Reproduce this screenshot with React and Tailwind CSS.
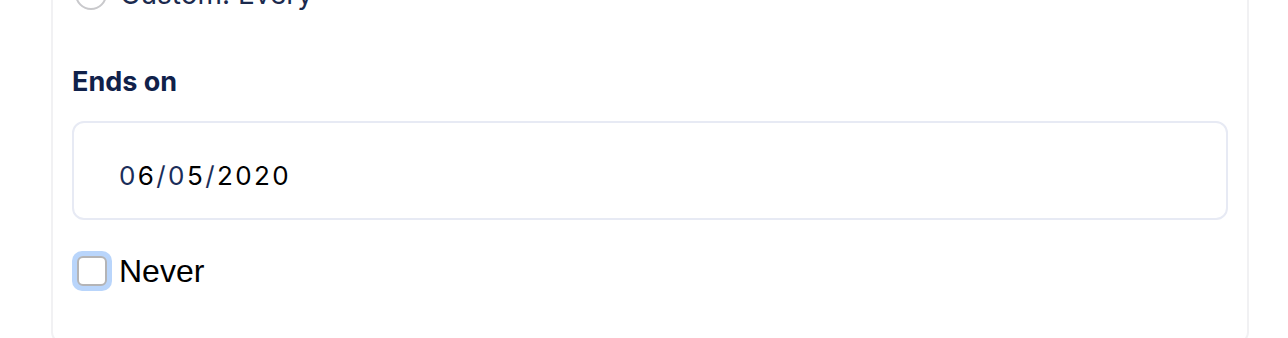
import React, { useState } from 'react';

const App = () => {
  const [never, setNever] = useState(false);

  return (
    <div className="w-[1288px] h-[338px] overflow-hidden bg-white">
      <div className="ml-[51px] w-[1198px] h-[346px] -mt-[2px] flex flex-col border-2 border-t-0 border-[#f1f1f3] rounded-b-[12px] px-[19px]">
        {/* radio row, cut off at top */}
        <div className="flex items-center gap-[13px] -mt-[20px] ml-[3px]">
          <div className="w-[32px] h-[32px] rounded-full border-2 border-[#c9c9cc] bg-white" />
          <span className="text-[28px] leading-[32px] text-[#1b2a4e]" style={{ fontFamily: 'Inter, sans-serif' }}>
            Custom: Every
          </span>
        </div>

        <div
          className="mt-[56px] text-[27px] leading-[32px] font-bold text-[#10214a]"
          style={{ fontFamily: 'Inter, sans-serif' }}
        >
          Ends on
        </div>

        <div className="mt-[23px] h-[99px] border-2 border-[#e7eaf4] rounded-[12px] flex items-center pl-[45px]">
          <span
            className="text-[26px] tracking-[2.4px] text-black pt-[10px]"
            style={{ fontFamily: 'Inter, sans-serif' }}
          >
            <span className="text-[#1b2e5a]">0</span>6<span className="text-[#1b2e5a]">/0</span>5<span className="text-[#1b2e5a]">/</span>2020
          </span>
        </div>

        <label className="mt-[31px] flex items-center gap-[7px] cursor-pointer" onClick={() => setNever(!never)}>
          <div className="w-[40px] h-[40px] rounded-[10px] bg-[#b9d5fb] p-[5px]">
            <div className="w-full h-full rounded-[6px] border-2 border-[#b4b4b6] bg-white" />
          </div>
          <span className="text-[32px] leading-[36px] text-black" style={{ fontFamily: '"Liberation Sans", Arial, sans-serif' }}>
            Never
          </span>
        </label>
      </div>
    </div>
  );
};

export default App;
